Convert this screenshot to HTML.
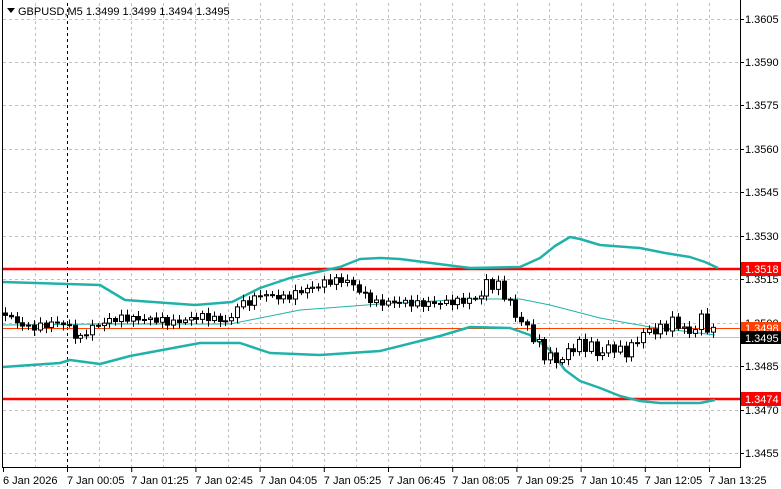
<!DOCTYPE html>
<html><head><meta charset="utf-8"><style>
html,body{margin:0;padding:0;background:#fff;width:781px;height:489px;overflow:hidden;font-family:"Liberation Sans",Tahoma,sans-serif;}
svg{position:absolute;left:0;top:0}
text{font-family:"Liberation Sans",sans-serif;font-size:11px;fill:#000}
</style></head><body>
<svg id="s" width="781" height="489" viewBox="0 0 781 489">
<g stroke="#c0c0c0" stroke-dasharray="3,3" stroke-width="1">
<line x1="3" y1="19.5" x2="740" y2="19.5"/><line x1="3" y1="62.5" x2="740" y2="62.5"/><line x1="3" y1="105.5" x2="740" y2="105.5"/><line x1="3" y1="149.5" x2="740" y2="149.5"/><line x1="3" y1="192.5" x2="740" y2="192.5"/><line x1="3" y1="236.5" x2="740" y2="236.5"/><line x1="3" y1="279.5" x2="740" y2="279.5"/><line x1="3" y1="323.5" x2="740" y2="323.5"/><line x1="3" y1="366.5" x2="740" y2="366.5"/><line x1="3" y1="410.5" x2="740" y2="410.5"/><line x1="3" y1="453.5" x2="740" y2="453.5"/>
</g>
<g id="vg" stroke="#c0c0c0" stroke-dasharray="3,3"></g>
<line x1="67.5" y1="3" x2="67.5" y2="467" stroke="#000" stroke-dasharray="3,3"/>
<line x1="3" y1="337.5" x2="740" y2="337.5" stroke="#c0c0c0"/>
<line x1="3" y1="328.5" x2="740" y2="328.5" stroke="#ff4000"/>
<line x1="3" y1="269" x2="740" y2="269" stroke="#ff0000" stroke-width="2.5"/>
<line x1="3" y1="399" x2="740" y2="399" stroke="#ff0000" stroke-width="2.5"/>
<g fill="none" stroke="#20b2aa" stroke-linejoin="round">
<polyline stroke-width="2.5" points="3,282 100,285 125,300 195,305 232,302 260,288 290,278 340,267 360,259 380,258 400,259 470,268 520,267 540,258 555,246 570,237 580,239 600,245 640,248 665,253 690,257 705,262 718,268"/>
<polyline stroke-width="1" points="3,325 100,324 230,324 300,310 380,304 470,299 520,299 550,305 600,318 650,327 715,335"/>
<polyline stroke-width="2.5" points="3,367 60,363 70,360 100,364 130,356 200,343 240,343 270,353 320,355 380,351 440,336 470,327 510,328 530,335 550,350 565,370 580,381 600,388 620,396 640,401 660,403 700,403 715,400"/>
</g>
<g id="cd"></g>
<line x1="2.5" y1="0" x2="2.5" y2="468" stroke="#000"/>
<line x1="2" y1="467.5" x2="741" y2="467.5" stroke="#000"/>
<line x1="740.5" y1="0" x2="740.5" y2="468" stroke="#000"/>
<g id="rt"></g>
<polygon points="7,8 15,8 11,13" fill="#000"/>
<text x="18" y="15">GBPUSD,M5  1.3499 1.3499 1.3494 1.3495</text>
<g id="bt"></g>
<rect x="741" y="262" width="40" height="14" fill="#ff0000"/><text x="745" y="273" style="fill:#fff">1.3518</text>
<rect x="741" y="322" width="40" height="13" fill="#ff4000"/><text x="745" y="332" style="fill:#fff">1.3498</text>
<rect x="741" y="331" width="40" height="13" fill="#000"/><text x="745" y="342" style="fill:#fff">1.3495</text>
<rect x="741" y="392" width="40" height="14" fill="#ff0000"/><text x="745" y="403" style="fill:#fff">1.3474</text>
</svg>
<script>
var NS="http://www.w3.org/2000/svg";
function el(p,t,a,txt){var e=document.createElementNS(NS,t);for(var k in a)e.setAttribute(k,a[k]);if(txt)e.textContent=txt;document.getElementById(p).appendChild(e);}
for(var x=35;x<740;x+=32.1){if(Math.abs(x-67)<3)continue;el('vg','line',{x1:Math.round(x)+.5,y1:3,x2:Math.round(x)+.5,y2:467});}
var pr=['1.3605',19,'1.3590',62,'1.3575',105,'1.3560',149,'1.3545',192,'1.3530',236,'1.3515',279,'1.3500',323,'1.3485',366,'1.3470',410,'1.3455',453];
for(var i=0;i<pr.length;i+=2){el('rt','line',{x1:740,y1:pr[i+1]+.5,x2:744,y2:pr[i+1]+.5,stroke:'#000'});el('rt','text',{x:745,y:pr[i+1]+4},pr[i]);}
var lb=['6 Jan 2026','7 Jan 00:05','7 Jan 01:25','7 Jan 02:45','7 Jan 04:05','7 Jan 05:25','7 Jan 06:45','7 Jan 08:05','7 Jan 09:25','7 Jan 10:45','7 Jan 12:05','7 Jan 13:25'];
for(var i=0;i<lb.length;i++){var x=3+64.2*i;if(i>0)x=67+64.2*(i-1);el('bt','line',{x1:x+.5,y1:467,x2:x+.5,y2:472,stroke:'#000'});el('bt','text',{x:x,y:484},lb[i]);}
var P=[5,313,15,322,30,328,60,322,70,328,78,341,90,328,110,320,120,318,160,320,170,323,190,319,200,316,230,322,236,305,250,302,260,294,270,296,285,298,300,291,315,287,325,282,340,280,350,282,360,292,375,303,400,302,420,304,450,302,470,300,480,296,487,282,497,286,505,295,515,315,525,325,535,340,545,355,560,362,570,348,580,345,590,346,600,356,610,345,620,352,630,350,640,335,650,330,660,330,670,322,680,325,690,335,700,318,710,330,716,337];
function f(x){for(var i=0;i<P.length-2;i+=2){if(x<=P[i+2]){var t=(x-P[i])/(P[i+2]-P[i]);return P[i+1]+t*(P[i+3]-P[i+1]);}}return P[P.length-1];}
var prev=f(5);
for(var x=5;x<=716;x+=5.8){var amp=(x>480&&x<720)?6:3;var c=f(x)+Math.sin(x*1.7)*amp,o=prev;var hi=Math.min(o,c)-2-Math.abs(Math.sin(x*0.9))*4,lo=Math.max(o,c)+2+Math.abs(Math.cos(x*1.3))*4;
var cx=Math.round(x)+.5;el('cd','line',{x1:cx,y1:hi,x2:cx,y2:lo,stroke:'#000'});
var t=Math.min(o,c),h=Math.max(1,Math.abs(c-o));
el('cd','rect',{x:cx-2,y:t,width:4,height:h,fill:(c<o?'#fff':'#000'),stroke:'#000','stroke-width':1});
prev=c;}
</script>
</body></html>
